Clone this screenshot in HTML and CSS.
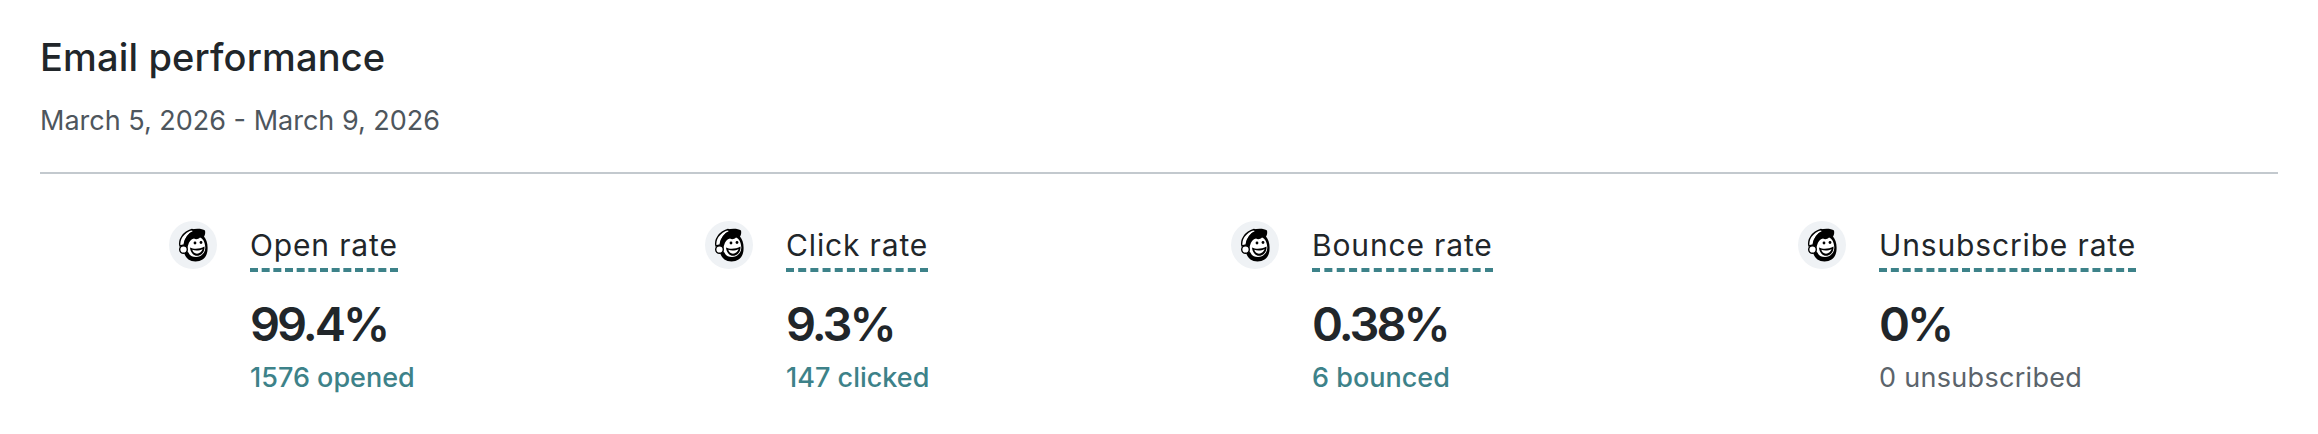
FILE: index.html
```html
<!DOCTYPE html>
<html lang="en">
<head>
<meta charset="utf-8">
<title>Email performance</title>
<link rel="stylesheet" href="styles.css">
</head>
<body>
<svg class="defs" width="0" height="0" aria-hidden="true">
  <symbol id="freddie" viewBox="0 0 48 48">
    <path fill="#fff" stroke="#000" stroke-width="1.400" d="M11 25C9.500 19 14 11 23 8.500L27 10C21 12 16 17 15 24Z"/>
    <path fill="#000" d="M22 9C27 7 33 7.500 36 9.500C36.500 12 36 14 35 15.500C37.500 18.500 39 23 38.500 29C38 36 33.500 40.500 26.500 40.500C21 40.500 17 37.500 15.500 33L15 23C16 17 19.500 12 24 10Z"/>
    <path fill="#fff" d="M19 24.500C20 20.500 22 18 25 17.500C27 19 29.500 18 31 16.500C34 17.500 36 21 36.300 26.500C36.500 32 32 36 27 36C23 36 20.500 34.500 19.500 31.500C17.500 31 18.500 26.500 19 24.500Z"/>
    <circle cx="14.500" cy="28.500" r="3.800" fill="#fff" stroke="#000" stroke-width="1.400"/>
    <path fill="#000" d="M21 26.500C25 28.500 31 28 35.500 25.500C36 30.500 32.500 34.800 28 34.800C24 34.800 21.500 31 21 26.500Z"/>
    <path fill="#fff" d="M23.300 28.800C26.500 30 30.500 29.700 33.600 28C33 30.700 30.500 32.700 28 32.700C25.500 32.700 23.800 31 23.300 28.800Z"/>
    <circle cx="26" cy="22" r="1.400" fill="#000"/>
    <circle cx="32" cy="21.500" r="1.400" fill="#000"/>
  </symbol>
</svg>
<main class="panel">
  <header class="head">
    <h1 class="title">Email performance</h1>
    <p class="range">March 5, 2026 - March 9, 2026</p>
  </header>
  <section class="stats">
    <article class="stat">
      <span class="badge"><svg class="logo"><use href="#freddie"/></svg></span>
      <div class="body">
        <span class="label">Open rate</span>
        <strong class="value">99.4%</strong>
        <span class="detail link">1576 opened</span>
      </div>
    </article>
    <article class="stat">
      <span class="badge"><svg class="logo"><use href="#freddie"/></svg></span>
      <div class="body">
        <span class="label">Click rate</span>
        <strong class="value">9.3%</strong>
        <span class="detail link">147 clicked</span>
      </div>
    </article>
    <article class="stat">
      <span class="badge"><svg class="logo"><use href="#freddie"/></svg></span>
      <div class="body">
        <span class="label">Bounce rate</span>
        <strong class="value">0.38%</strong>
        <span class="detail link">6 bounced</span>
      </div>
    </article>
    <article class="stat">
      <span class="badge"><svg class="logo"><use href="#freddie"/></svg></span>
      <div class="body">
        <span class="label">Unsubscribe rate</span>
        <strong class="value">0%</strong>
        <span class="detail muted">0 unsubscribed</span>
      </div>
    </article>
  </section>
</main>
</body>
</html>
```
FILE: styles.css
```css
* { box-sizing: border-box; }
html, body { margin: 0; background: #fff; }
body { font-family: Inter, "Liberation Sans", sans-serif; color: #241c15; }
.defs { position: absolute; }
.panel { padding: 34px 40px 0; }
.head { border-bottom: 2px solid #c3c9ce; padding-bottom: 33px; }
.title { margin: 0; font-size: 38px; line-height: 46px; font-weight: 500; letter-spacing: 0.15px; color: #21262a; }
.range { margin: 23px 0 0; font-size: 27px; line-height: 36px; color: #4e565d; }
.stats { display: grid; grid-template-columns: 536px 526px 567px 1fr; padding: 47px 0 0 129px; }
.stat { display: flex; gap: 33px; align-items: flex-start; }
.badge { width: 48px; height: 48px; border-radius: 50%; background: #eff2f5; flex: none; }
.logo { display: block; width: 48px; height: 48px; }
.body { display: flex; flex-direction: column; align-items: flex-start; }
.label { font-size: 30px; line-height: 40px; letter-spacing: 0.85px; color: #21262a; border-bottom: 4px dashed #3d8289; padding-top: 4px; padding-bottom: 3px; }
.value { margin-top: 25px; font-size: 47px; line-height: 54px; font-weight: 600; letter-spacing: -3px; color: #21262a; }
.detail { margin-top: 9px; font-size: 27px; line-height: 36px; }
.muted { color: #5b646b; letter-spacing: 0.3px; }
.link { color: #3d8289; font-weight: 500; }
```
